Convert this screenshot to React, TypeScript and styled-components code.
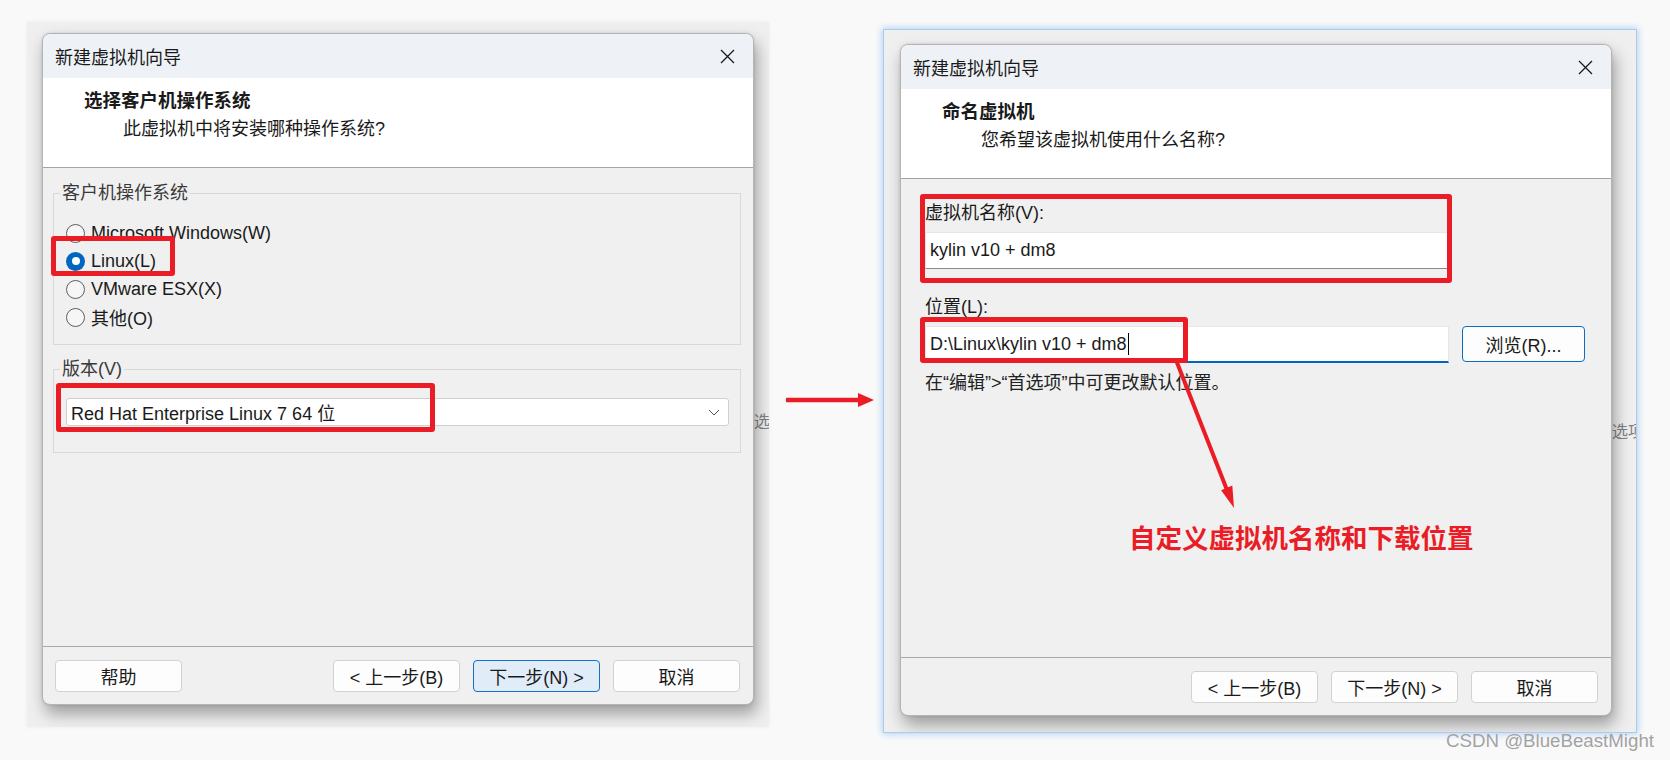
import styled, { createGlobalStyle } from "styled-components";

const GlobalStyle = createGlobalStyle`
  * { box-sizing: border-box; }
  html, body { margin: 0; padding: 0; background: #f9f9f9; }
  body {
    font-family: "Liberation Sans", "Noto Sans CJK SC", sans-serif;
    color: #1a1a1a;
  }
`;

const RED = "#ea1d27";

const Page = styled.main`
  position: relative;
  width: 1670px;
  height: 760px;
  display: flex;
  align-items: flex-start;
  padding-left: 27px;
  overflow: hidden;
`;

const Shot = styled.section<{ $top: number; $pad: string; $glow?: boolean }>`
  margin-top: ${(p) => p.$top}px;
  display: flex;
  align-items: flex-start;
  padding: ${(p) => p.$pad};
  background: #efefef;
  overflow: hidden;
  box-shadow: ${(p) =>
    p.$glow
      ? "0 0 0 1px #a9cbf2, 0 0 7px 2px #b3d0f2"
      : "0 0 4px rgba(0, 0, 0, 0.06)"};
`;

const Behind = styled.div<{ $w: number; $top: number }>`
  width: ${(p) => p.$w}px;
  flex: none;
  overflow: hidden;
  white-space: nowrap;
  padding-top: ${(p) => p.$top}px;
  font-size: 16px;
  line-height: 16px;
  color: #808080;
`;

const Dialog = styled.div`
  position: relative;
  flex: none;
  width: 712px;
  height: 672px;
  display: flex;
  flex-direction: column;
  background: #f0f0f0;
  border: 1px solid #b4b4b4;
  border-radius: 8px;
  overflow: hidden;
  box-shadow: 3px 9px 16px rgba(0, 0, 0, 0.34), 0 0 3px rgba(0, 0, 0, 0.12);
`;

const TitleBar = styled.header`
  height: 44px;
  flex: none;
  display: flex;
  align-items: center;
  justify-content: space-between;
  padding: 0 18px 0 12px;
  background: #eef2f7;
  font-size: 18px;
`;

const Header = styled.div`
  height: 90px;
  flex: none;
  padding: 10px 0 0 41px;
  background: #ffffff;
  border-bottom: 1px solid #a3a3a3;
`;

const Heading = styled.h2`
  margin: 0;
  font-size: 18.5px;
  line-height: 26px;
  font-weight: 700;
`;

const SubHeading = styled.p`
  margin: 2px 0 0 39px;
  font-size: 18px;
  line-height: 26px;
`;

const Body = styled.div<{ $pad: string }>`
  flex: 1;
  padding: ${(p) => p.$pad};
`;

const Footer = styled.footer`
  height: 58px;
  flex: none;
  display: flex;
  gap: 13px;
  padding: 13px 13px 0 12px;
  border-top: 1px solid #a8a8a8;
  justify-content: flex-end;
  align-items: flex-start;
`;

const Button = styled.button<{ $primary?: boolean; $push?: boolean }>`
  width: 127px;
  height: 32px;
  padding: 0;
  font-family: inherit;
  font-size: 18px;
  color: #1a1a1a;
  background: ${(p) => (p.$primary ? "#e0ecf8" : "#fdfdfd")};
  border: 1px solid ${(p) => (p.$primary ? "#1470c8" : "#d2d2d2")};
  border-radius: 4px;
  margin-right: ${(p) => (p.$push ? "auto" : "0")};
`;

const Group = styled.fieldset<{ $pad: string }>`
  margin: 0;
  min-width: 0;
  padding: ${(p) => p.$pad};
  border: 1px solid #d8d8d8;
  & + & {
    margin-top: 12px;
  }
`;

const Legend = styled.legend`
  margin-left: 6px;
  padding: 0 2px;
  font-size: 18px;
  line-height: 24px;
  color: #3a3a3a;
`;

const RadioList = styled.div`
  padding-left: 12px;
  display: flex;
  flex-direction: column;
`;

const RadioRow = styled.label`
  height: 28px;
  display: flex;
  align-items: center;
  gap: 6px;
  font-size: 18px;
`;

const RadioDot = styled.span<{ $on?: boolean }>`
  width: 19px;
  height: 19px;
  border-radius: 50%;
  display: grid;
  place-items: center;
  background: ${(p) => (p.$on ? "#0067c0" : "#f6f6f6")};
  border: ${(p) => (p.$on ? "none" : "1px solid #5d5d5d")};
  &::after {
    content: "";
    display: ${(p) => (p.$on ? "block" : "none")};
    width: 8px;
    height: 8px;
    border-radius: 50%;
    background: #ffffff;
  }
`;

const Select = styled.div`
  margin-left: 12px;
  height: 28px;
  display: flex;
  align-items: center;
  justify-content: space-between;
  padding: 0 8px 0 4px;
  background: #ffffff;
  border: 1px solid #d0d0d0;
  border-radius: 3px;
  font-size: 18px;
`;

const Form = styled.div`
  display: grid;
  grid-template-columns: 524px 123px;
  column-gap: 13px;
  align-items: start;
`;

const FieldLabel = styled.div<{ $gap: number }>`
  grid-column: 1 / -1;
  margin-top: ${(p) => p.$gap}px;
  font-size: 18px;
  line-height: 26px;
`;

const TextBox = styled.div<{ $focus?: boolean }>`
  margin-top: 6px;
  height: 37px;
  display: flex;
  align-items: center;
  padding-left: 4px;
  background: #ffffff;
  border: 1px solid #e6e6e6;
  border-bottom: ${(p) => (p.$focus ? "2px solid #0067c0" : "1px solid #8a8a8a")};
  font-size: 18px;
`;

const Caret = styled.span`
  display: inline-block;
  width: 1px;
  height: 22px;
  margin-left: 1px;
  background: #000000;
`;

const Browse = styled(Button)`
  width: 123px;
  height: 36px;
  margin-top: 6px;
  border-color: #0a6cc4;
`;

const Hint = styled.div`
  grid-column: 1 / -1;
  margin-top: 7px;
  font-size: 18px;
  line-height: 26px;
  color: #222;
`;

const Mark = styled.div<{ $x: number; $y: number; $w: number; $h: number }>`
  position: absolute;
  left: ${(p) => p.$x}px;
  top: ${(p) => p.$y}px;
  width: ${(p) => p.$w}px;
  height: ${(p) => p.$h}px;
  border: 5px solid ${RED};
  border-radius: 3px;
  pointer-events: none;
`;

const Pointer = styled.svg`
  position: absolute;
  left: 260px;
  top: 310px;
  overflow: visible;
`;

const Note = styled.div`
  position: absolute;
  left: 228px;
  top: 479px;
  font-size: 26.5px;
  line-height: 30px;
  font-weight: 700;
  color: ${RED};
  white-space: nowrap;
`;

const ArrowCell = styled.div`
  width: 115px;
  flex: none;
  padding: 392px 0 0 17px;
`;

const Watermark = styled.div`
  position: absolute;
  left: 1446px;
  top: 730px;
  font-size: 18.7px;
  line-height: 22px;
  color: #a2a2a2;
  text-shadow: 0 0 1px #ffffff;
  white-space: nowrap;
`;

const CloseIcon = () => (
  <svg width="15" height="15" viewBox="0 0 15 15">
    <path d="M1 1 L14 14 M14 1 L1 14" stroke="#1a1a1a" strokeWidth="1.3" />
  </svg>
);

const Chevron = () => (
  <svg width="12" height="7" viewBox="0 0 12 7">
    <path d="M1 1 L6 6 L11 1" fill="none" stroke="#555" strokeWidth="1" />
  </svg>
);

const Wizard = ({ heading, sub, children, buttons }: {
  heading: string;
  sub: string;
  children: React.ReactNode;
  buttons: React.ReactNode;
}) => (
  <>
    <TitleBar>
      <span>新建虚拟机向导</span>
      <CloseIcon />
    </TitleBar>
    <Header>
      <Heading>{heading}</Heading>
      <SubHeading>{sub}</SubHeading>
    </Header>
    {children}
    <Footer>{buttons}</Footer>
  </>
);

const osList = [
  { label: "Microsoft Windows(W)", on: false },
  { label: "Linux(L)", on: true },
  { label: "VMware ESX(X)", on: false },
  { label: "其他(O)", on: false },
];

export default function App() {
  return (
    <Page>
      <GlobalStyle />

      <Shot $top={22} $pad="11px 0 22px 15px">
        <Dialog>
          <Wizard
            heading="选择客户机操作系统"
            sub="此虚拟机中将安装哪种操作系统?"
            buttons={
              <>
                <Button $push>帮助</Button>
                <Button>&lt; 上一步(B)</Button>
                <Button $primary>下一步(N) &gt;</Button>
                <Button>取消</Button>
              </>
            }
          >
            <Body $pad="13px 12px 0 10px">
              <Group $pad="14px 11px 13px 0">
                <Legend>客户机操作系统</Legend>
                <RadioList>
                  {osList.map((os) => (
                    <RadioRow key={os.label}>
                      <RadioDot $on={os.on} />
                      {os.label}
                    </RadioRow>
                  ))}
                </RadioList>
              </Group>
              <Group $pad="17px 11px 26px 0">
                <Legend>版本(V)</Legend>
                <Select>
                  <span>Red Hat Enterprise Linux 7 64 位</span>
                  <Chevron />
                </Select>
              </Group>
            </Body>
          </Wizard>
          <Mark $x={8} $y={202} $w={124} $h={40} />
          <Mark $x={13} $y={349} $w={379} $h={49} />
        </Dialog>
        <Behind $w={15} $top={381}>选</Behind>
      </Shot>

      <ArrowCell>
        <svg width="90" height="16" viewBox="0 0 90 16">
          <line x1="0" y1="8" x2="76" y2="8" stroke={RED} strokeWidth="4.5" strokeLinecap="round" />
          <path d="M72 1 L88 8 L72 15 Z" fill={RED} />
        </svg>
      </ArrowCell>

      <Shot $top={30} $pad="14px 0 16px 16px" $glow>
        <Dialog>
          <Wizard
            heading="命名虚拟机"
            sub="您希望该虚拟机使用什么名称?"
            buttons={
              <>
                <Button>&lt; 上一步(B)</Button>
                <Button>下一步(N) &gt;</Button>
                <Button>取消</Button>
              </>
            }
          >
            <Body $pad="0 26px 0 24px">
              <Form>
                <FieldLabel $gap={21}>虚拟机名称(V):</FieldLabel>
                <TextBox>kylin v10 + dm8</TextBox>
                <FieldLabel $gap={25}>位置(L):</FieldLabel>
                <TextBox $focus>
                  D:\Linux\kylin v10 + dm8
                  <Caret />
                </TextBox>
                <Browse>浏览(R)...</Browse>
                <Hint>在“编辑”&gt;“首选项”中可更改默认位置。</Hint>
              </Form>
            </Body>
          </Wizard>
          <Mark $x={19} $y={149} $w={532} $h={89} />
          <Mark $x={19} $y={272} $w={268} $h={46} />
          <Pointer width="90" height="160" viewBox="0 0 90 160">
            <line x1="15" y1="5" x2="66" y2="135" stroke={RED} strokeWidth="4" strokeLinecap="round" />
            <path d="M73 153 L71.3 130.5 L60.1 135.3 Z" fill={RED} />
          </Pointer>
          <Note>自定义虚拟机名称和下载位置</Note>
        </Dialog>
        <Behind $w={24} $top={380}>选项</Behind>
      </Shot>

      <Watermark>CSDN @BlueBeastMight</Watermark>
    </Page>
  );
}
